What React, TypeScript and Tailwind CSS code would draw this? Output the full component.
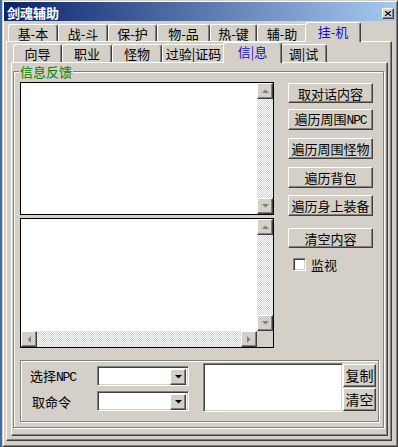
import type { ReactNode } from "react";

const raised =
  "border border-t-white border-l-white border-r-[#404040] border-b-[#404040] shadow-[inset_-1px_-1px_#808080]";
const sunken =
  "border border-t-[#808080] border-l-[#808080] border-r-white border-b-white shadow-[inset_1px_1px_#404040,inset_-1px_-1px_#d4d0c8]";
const etched = "border border-[#808080] shadow-[inset_1px_1px_white,1px_1px_white]";
const track =
  "bg-[image:repeating-conic-gradient(#d4d0c8_0%_25%,#ffffff_0%_50%)] bg-[length:2px_2px]";

function Arrow({ dir, dark }: { dir: "up" | "down" | "left" | "right"; dark?: boolean }) {
  const pts = {
    up: "0,4 7,4 3.5,0.5",
    down: "0,0 7,0 3.5,3.5",
    left: "4,0 4,7 0.5,3.5",
    right: "0,0 0,7 3.5,3.5",
  }[dir];
  const vertical = dir === "up" || dir === "down";
  return (
    <div className={`w-[16px] h-[16px] shrink-0 bg-[#d4d0c8] ${raised} flex items-center justify-center`}>
      <svg width={vertical ? 7 : 4} height={vertical ? 4 : 7}>
        <polygon points={pts} fill={dark ? "#000000" : "#808080"} />
      </svg>
    </div>
  );
}

function Tab({ label, w, active, h }: { label: ReactNode; w: string; active?: boolean; h: string }) {
  return (
    <div
      className={`${w} ${h} shrink-0 bg-[#d4d0c8] border-t border-l border-r border-t-white border-l-white border-r-[#404040] shadow-[inset_-1px_0_#808080] rounded-t-[3px] flex items-start justify-center pt-[1px] text-[13px] leading-[15px] ${
        active ? "relative z-10 -mx-[2px] -mb-[1px] text-[#1010c8]" : "text-black"
      }`}
    >
      {label}
    </div>
  );
}

function Btn({ children, className }: { children: ReactNode; className?: string }) {
  return (
    <div
      className={`bg-[#d4d0c8] ${raised} flex items-center justify-center text-[13px] text-black ${className ?? ""}`}
    >
      <span className="leading-[15px] whitespace-nowrap">{children}</span>
    </div>
  );
}

function Npc() {
  return (
    <span className="font-['Liberation_Mono',monospace] text-[13px] tracking-[-1.2px] align-baseline">NPC</span>
  );
}

function Combo({ className }: { className?: string }) {
  return (
    <div className={`w-[92px] h-[20px] bg-white ${sunken} flex justify-end p-[2px] ${className ?? ""}`}>
      <Arrow dir="down" dark />
    </div>
  );
}

export default function App() {
  return (
    <div className="w-[398px] h-[447px] bg-[#3a6ea5] flex overflow-hidden font-['Noto_Sans_CJK_SC',sans-serif]">
      <div className="ml-[2px] w-[396px] h-[447px] bg-[#d4d0c8] border border-[#d4d0c8] border-r-[#404040] border-b-[#404040] shadow-[inset_1px_1px_white,inset_-1px_-1px_#808080] p-[1px] flex flex-col">
        {/* title bar */}
        <div className="h-[19px] shrink-0 bg-[linear-gradient(to_right,#0a246a,#a6caf0)] flex items-end justify-between pl-[3px] pr-[2px] pb-[1px]">
          <span className="text-white font-bold text-[13px] leading-[15px]">剑魂辅助</span>
          <div className={`w-[12px] h-[11px] mb-[1px] bg-[#d4d0c8] ${raised} flex items-center justify-center`}>
            <svg width="6" height="5">
              <path d="M0 0 L6 5 M6 0 L0 5" stroke="#000" strokeWidth="1.2" />
            </svg>
          </div>
        </div>

        {/* outer tabs */}
        <div className="ml-[2px] mt-[1px] h-[19px] shrink-0 flex items-end pl-[2px]">
          <Tab label="基-本" w="w-[50px]" h="h-[17px]" />
          <Tab label="战-斗" w="w-[50px]" h="h-[17px]" />
          <Tab label="保-护" w="w-[49px]" h="h-[17px]" />
          <Tab label="物-品" w="w-[53px]" h="h-[17px]" />
          <Tab label="热-键" w="w-[47px]" h="h-[17px]" />
          <Tab label="辅-助" w="w-[50px]" h="h-[17px]" />
          <Tab label="挂-机" w="w-[56px]" h="h-[20px]" active />
        </div>

        <div className="ml-[2px] w-[386px] h-[400px] shrink-0 border border-t-white border-l-white border-r-[#404040] border-b-[#404040] shadow-[inset_-1px_-1px_#808080] flex flex-col">
          {/* inner tabs */}
          <div className="ml-[4px] h-[20px] shrink-0 flex items-end pl-[2px]">
            <Tab label="向导" w="w-[49px]" h="h-[18px]" />
            <Tab label="职业" w="w-[50px]" h="h-[18px]" />
            <Tab label="怪物" w="w-[50px]" h="h-[18px]" />
            <Tab label="过验|证码" w="w-[63px]" h="h-[18px]" />
            <Tab label="信|息" w="w-[59px]" h="h-[21px]" active />
            <Tab label="调|试" w="w-[47px]" h="h-[18px]" />
          </div>

          <div className="ml-[4px] w-[377px] h-[374px] shrink-0 border border-t-white border-l-white border-r-[#404040] border-b-[#404040] shadow-[inset_-1px_-1px_#808080]">
            {/* group box */}
            <div className={`relative ml-[1px] mt-[8px] w-[371px] h-[357px] ${etched}`}>
              <span className="absolute left-[5px] -top-[7px] bg-[#d4d0c8] px-[1px] text-[13px] leading-[14px] text-[#008000]">
                信息反馈
              </span>

              <div className="ml-[6px] mt-[10px] flex">
                <div className="w-[254px] flex flex-col gap-[3px]">
                  <div className="h-[133px] border border-black bg-white flex justify-end">
                    <div className={`w-[16px] flex flex-col ${track}`}>
                      <Arrow dir="up" />
                      <div className="flex-1" />
                      <Arrow dir="down" />
                    </div>
                  </div>
                  <div className="h-[130px] border border-black bg-white flex flex-col">
                    <div className="flex-1 flex justify-end">
                      <div className={`w-[16px] flex flex-col ${track}`}>
                        <Arrow dir="up" />
                        <div className="flex-1" />
                        <Arrow dir="down" />
                      </div>
                    </div>
                    <div className="h-[16px] flex">
                      <div className={`flex-1 flex ${track}`}>
                        <Arrow dir="left" />
                        <div className="flex-1" />
                        <Arrow dir="right" />
                      </div>
                      <div className="w-[16px] bg-[#d4d0c8]" />
                    </div>
                  </div>
                </div>

                <div className="ml-[14px] w-[85px] flex flex-col">
                  <Btn className="mt-[1px] h-[20px]">取对话内容</Btn>
                  <Btn className="mt-[6px] h-[21px]">
                    遍历周围<Npc />
                  </Btn>
                  <Btn className="mt-[8px] h-[21px]">遍历周围怪物</Btn>
                  <Btn className="mt-[8px] h-[21px]">遍历背包</Btn>
                  <Btn className="mt-[7px] h-[21px]">遍历身上装备</Btn>
                  <Btn className="mt-[12px] h-[20px]">清空内容</Btn>
                  <div className="mt-[10px] ml-[5px] flex items-center gap-[5px]">
                    <div className={`w-[13px] h-[13px] bg-white ${sunken}`} />
                    <span className="text-[13px] leading-none">监视</span>
                  </div>
                </div>
              </div>

              {/* bottom box */}
              <div className={`ml-[6px] mt-[12px] w-[359px] h-[62px] ${etched} flex`}>
                <div className="pl-[9px] pt-[5px] flex flex-col">
                  <div className="flex items-center h-[20px]">
                    <span className="w-[67px] text-[13px] leading-[15px] whitespace-nowrap">
                      选择<Npc />
                    </span>
                    <Combo />
                  </div>
                  <div className="flex items-center h-[20px] mt-[5px]">
                    <span className="w-[67px] pl-[2px] text-[13px] leading-[15px]">取命令</span>
                    <Combo />
                  </div>
                </div>
                <div className={`ml-[14px] mt-[2px] w-[140px] h-[49px] bg-white ${sunken}`} />
                <div className="mt-[3px] flex flex-col gap-[1px]">
                  <Btn className="w-[33px] h-[23px] text-[14px]">复制</Btn>
                  <Btn className="w-[33px] h-[23px] text-[14px]">清空</Btn>
                </div>
              </div>
            </div>
          </div>
        </div>
      </div>
    </div>
  );
}
